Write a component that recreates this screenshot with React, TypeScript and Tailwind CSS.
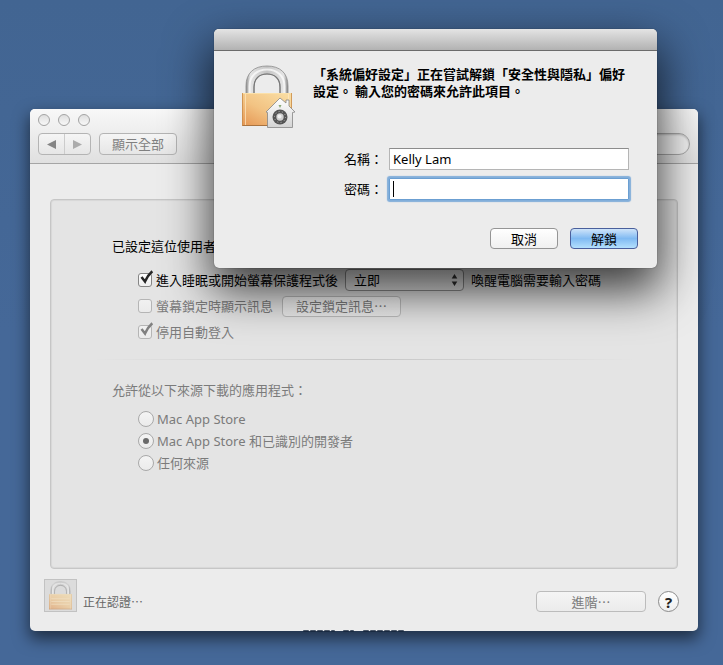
import { useId, type InputHTMLAttributes, type ReactNode } from "react";
import clsx from "clsx";

const CJK = "font-['Noto_Sans_CJK_TC','Noto_Sans',sans-serif]";

export default function App() {
  return (
    <div className="relative min-h-screen overflow-hidden bg-linear-to-b from-[#426592] via-[#456898] to-[#456898] pt-[109px] pr-[25px] pb-[34px] pl-[30px] font-['Noto_Sans','Noto_Sans_CJK_TC',sans-serif] text-[13px] leading-5 text-black">
      <PreferencesWindow />
      <UnlockDialog />
    </div>
  );
}

const PreferencesWindow = () => {
  return (
    <main className="relative rounded-[5px] bg-[#ececec] shadow-[0_7px_16px_1px_rgba(0,0,0,0.55)]">
      <DesktopLabel />
      <header className="flex h-[55px] flex-col rounded-t-[5px] border-b border-[#a5a5a5] bg-linear-to-b from-[#f8f8f8] to-[#e0e0e0] px-2 pt-[5px]">
        <div className="flex gap-2">
          <TrafficLight label="關閉" />
          <TrafficLight label="最小化" />
          <TrafficLight label="縮放" />
        </div>
        <div className="mt-[7px] flex items-center gap-2">
          <div className="flex h-[22px] w-[53px] items-center rounded-[4px] border border-[#b4b4b4] bg-linear-to-b from-[#f5f5f5] to-[#e6e6e6]">
            <button type="button" aria-label="上一頁" className="flex h-full flex-1 items-center justify-center border-r border-[#cccccc]">
              <svg width="9" height="9" viewBox="0 0 9 9">
                <path d="M0 4.5 9 0v9z" fill="#858585" />
              </svg>
            </button>
            <button type="button" aria-label="下一頁" className="flex h-full flex-1 items-center justify-center">
              <svg width="9" height="9" viewBox="0 0 9 9">
                <path d="M9 4.5 0 0v9z" fill="#acacac" />
              </svg>
            </button>
          </div>
          <button
            type="button"
            className={clsx(CJK, "flex h-[22px] w-[78px] items-center justify-center rounded-[4px] border border-[#b4b4b4] bg-linear-to-b from-[#f5f5f5] to-[#e6e6e6] text-[#808080]")}
          >
            顯示全部
          </button>
          <input
            type="search"
            aria-label="搜尋"
            className="ml-auto h-[22px] w-[140px] rounded-full border border-[#a8a8a8] bg-[#f3f3f3] px-3 shadow-[inset_0_1px_2px_rgba(0,0,0,0.2)] outline-none"
          />
        </div>
      </header>

      <div className="px-5 pt-[35px]">
        <section className="h-[370px] rounded-[4px] border border-[#c6c6c6] bg-[#e4e4e4] px-[61px] pt-9 shadow-[inset_0_0_1px_1px_rgba(0,0,0,0.06)]">
          <p className={CJK}>已設定這位使用者的登入密碼</p>
          <div className="mt-[13px] flex h-[22px] items-center pl-[26px]">
            <Checkbox defaultChecked>進入睡眠或開始螢幕保護程式後</Checkbox>
            <div className="relative ml-[7px] h-[22px] w-[119px] shrink-0">
              <select
                aria-label="需要密碼的時間"
                className={clsx(CJK, "h-full w-full appearance-none rounded-[4px] border border-[#8f8f8f] bg-linear-to-b from-[#fbfbfb] to-[#e8e8e8] pl-2 leading-5 outline-none")}
              >
                <option>立即</option>
              </select>
              <svg className="pointer-events-none absolute top-[5px] right-[6px]" width="7" height="12" viewBox="0 0 7 12">
                <path d="M3.500 0 6.300 4.500H.7zM3.500 12 6.300 7.500H.7z" fill="#333" />
              </svg>
            </div>
            <span className={clsx(CJK, "ml-[7px] whitespace-nowrap")}>喚醒電腦需要輸入密碼</span>
          </div>
          <div className="mt-1 flex h-[22px] items-center pl-[26px]">
            <Checkbox disabled>螢幕鎖定時顯示訊息</Checkbox>
            <PushButton disabled className="ml-[9px] w-[119px]">
              設定鎖定訊息…
            </PushButton>
          </div>
          <div className="mt-1 flex h-[22px] items-center pl-[26px]">
            <Checkbox disabled defaultChecked>
              停用自動登入
            </Checkbox>
          </div>

          <hr className="-mx-5 mt-4 h-px border-0 bg-linear-to-r from-transparent via-[#c6c6c6] to-transparent" />

          <fieldset disabled className="mt-5 text-[#7b7b7b]">
            <legend className={CJK}>允許從以下來源下載的應用程式：</legend>
            <div className="mt-2 pl-[26px]">
              <Radio>Mac App Store</Radio>
              <Radio defaultChecked>Mac App Store 和已識別的開發者</Radio>
              <Radio>任何來源</Radio>
            </div>
          </fieldset>
        </section>
      </div>

      <footer className="flex items-end pt-[10px] pr-[19px] pb-[19px] pl-[14px]">
        <button
          type="button"
          aria-label="鎖定"
          className="flex size-[33px] items-center justify-center border border-[#c2c2c2] bg-[#dcdcdc]"
        >
          <LockIcon className="h-[29px] w-[23px] opacity-60" />
        </button>
        <span className={clsx(CJK, "ml-[6px] text-xs leading-5 text-[#666]")}>正在認證…</span>
        <PushButton disabled className="ml-auto w-[110px]">
          進階…
        </PushButton>
        <button
          type="button"
          aria-label="輔助說明"
          className="ml-3 flex size-[21px] items-center justify-center rounded-full border border-[#8b8b8b] bg-linear-to-b from-white to-[#efefef] text-[15px] font-bold text-[#222]"
        >
          ?
        </button>
      </footer>
    </main>
  );
};

const UnlockDialog = () => {
  return (
    <div
      role="dialog"
      aria-labelledby="unlock-message"
      className="absolute top-[29px] right-[66px] left-[214px] rounded-[5px] bg-[#ececec] shadow-[0_0_1px_rgba(0,0,0,0.7),0_20px_46px_3px_rgba(0,0,0,0.74)]"
    >
      <div className="h-[22px] rounded-t-[5px] border-b border-[#6b6b6b] bg-linear-to-b from-[#e4e4e4] to-[#b2b2b2]" />
      <form className="px-[19px] pt-[14px] pb-[19px]" onSubmit={(e) => e.preventDefault()}>
        <div className="flex">
          <div className="h-[66px] w-[64px] shrink-0">
            <DialogLock />
          </div>
          <p id="unlock-message" className={clsx(CJK, "mr-2 ml-4 leading-[17px] font-bold")}>
            「系統偏好設定」正在嘗試解鎖「安全性與隱私」偏好設定。 輸入您的密碼來允許此項目。
          </p>
        </div>
        <div className="mt-[17px] grid grid-cols-[150px_1fr] items-center gap-x-[6px] gap-y-2 pr-[9px]">
          <label htmlFor="account" className={clsx(CJK, "text-right")}>
            名稱：
          </label>
          <input
            id="account"
            defaultValue="Kelly Lam"
            className="h-[22px] min-w-0 border border-[#b5b5b5] border-t-[#8c8c8c] bg-white px-[3px] outline-none"
          />
          <label htmlFor="password" className={clsx(CJK, "text-right")}>
            密碼：
          </label>
          <div className="relative h-[22px]">
            <input
              id="password"
              type="password"
              className="block h-full w-full rounded-[1px] border border-[#6b9fd2] bg-white px-[3px] caret-transparent shadow-[0_0_1px_2px_#82aeda] outline-none"
            />
            <span className="absolute top-[3px] left-1 h-4 w-px bg-black" />
          </div>
        </div>
        <div className="mt-7 flex justify-end gap-3">
          <PushButton className="w-[68px]">取消</PushButton>
          <PushButton primary className="w-[68px]">
            解鎖
          </PushButton>
        </div>
      </form>
    </div>
  );
};

const TrafficLight = ({ label }: { label: string }) => (
  <button
    type="button"
    aria-label={label}
    className="size-3 rounded-full border border-[#a3a3a3] bg-linear-to-b from-[#dedede] to-[#f8f8f8]"
  />
);

type PushButtonProps = {
  primary?: boolean;
  disabled?: boolean;
  className?: string;
  children: ReactNode;
};

const PushButton = ({ primary, disabled, className, children }: PushButtonProps) => (
  <button
    type="button"
    disabled={disabled}
    className={clsx(
      CJK,
      "flex h-[21px] items-center justify-center rounded-[4px] border whitespace-nowrap",
      primary && "border-[#4a5f9c] bg-linear-to-b from-[#cfe4f9] via-[#80baf2] to-[#b4e0fd]",
      disabled && "border-[#bcbcbc] bg-linear-to-b from-[#f5f5f5] to-[#ebebeb] text-[#7b7b7b]",
      !primary && !disabled && "border-[#959595] bg-linear-to-b from-white to-[#f0f0f0]",
      className,
    )}
  >
    {children}
  </button>
);

type ToggleProps = InputHTMLAttributes<HTMLInputElement> & { children: ReactNode };

const Checkbox = ({ children, disabled, ...props }: ToggleProps) => {
  const id = useId();
  return (
    <div className={clsx("flex items-center gap-1", disabled && "text-[#7b7b7b]")}>
      <span className="relative size-[14px] shrink-0">
        <input
          id={id}
          type="checkbox"
          disabled={disabled}
          className="peer block size-[14px] appearance-none rounded-[3px] border border-[#858585] bg-linear-to-b from-white to-[#eeeeee] disabled:border-[#b5b5b5] disabled:from-[#f1f1f1] disabled:to-[#ebebeb]"
          {...props}
        />
        <svg className="pointer-events-none absolute -top-[3px] left-px hidden peer-checked:block" width="15" height="15" viewBox="0 0 15 15">
          <path
            d="M2.500 7 6 11.500Q8.500 5.500 13.300 1.200"
            fill="none"
            stroke={disabled ? "#808080" : "#262626"}
            strokeWidth="2.500"
          />
        </svg>
      </span>
      <label htmlFor={id} className={clsx(CJK, "whitespace-nowrap")}>
        {children}
      </label>
    </div>
  );
};

const Radio = ({ children, ...props }: ToggleProps) => {
  const id = useId();
  return (
    <div className="flex h-[22px] items-center gap-[3px]">
      <span className="relative size-4 shrink-0">
        <input
          id={id}
          type="radio"
          name="download-source"
          className="peer block size-4 appearance-none rounded-full border border-[#a9a9a9] bg-linear-to-b from-[#f4f4f4] to-[#ebebeb]"
          {...props}
        />
        <span className="pointer-events-none absolute top-[5px] left-[5px] hidden size-[6px] rounded-full bg-[#6a6a6a] peer-checked:block" />
      </span>
      <label htmlFor={id}>{children}</label>
    </div>
  );
};

// Lower edge of a desktop icon's name, peeking out from under the window
const DesktopLabel = () => (
  <svg className="absolute -bottom-[2px] left-[272px]" width="106" height="3" viewBox="0 0 106 3">
    <path d="M2 1H32M42 1h9M62 1h42" stroke="#15253b" strokeWidth="2" strokeLinecap="round" strokeDasharray="4 3" opacity=".75" />
  </svg>
);

const LockShape = () => (
  <>
    <defs>
      <linearGradient id="brass" x1="0.800" x2="0" y1="0" y2="1">
        <stop offset="0" stopColor="#f9dba0" />
        <stop offset="0.500" stopColor="#f2c383" />
        <stop offset="1" stopColor="#e59552" />
      </linearGradient>
      <linearGradient id="steel" x1="0" x2="1">
        <stop offset="0" stopColor="#8e8e8e" />
        <stop offset="0.100" stopColor="#e4e4e4" />
        <stop offset="0.500" stopColor="#c4c4c4" />
        <stop offset="0.900" stopColor="#e4e4e4" />
        <stop offset="1" stopColor="#858585" />
      </linearGradient>
    </defs>
    <path d="M4 30V21C4 8 12 1 25 1s21 7 21 20v9h-8V22c0-8-5-13-13-13s-13 5-13 13v8z" fill="url(#steel)" stroke="#8b8b8b" strokeWidth=".8" />
    <path d="M7.500 28v-7C7.500 11 15 4.500 25 4.500S42.500 11 42.500 21v7" fill="none" stroke="#fff" strokeWidth="2" opacity=".7" />
    <path d="M12 28v-6c0-8 5-13 13-13s13 5 13 13v6" fill="none" stroke="#777" strokeWidth="1.200" />
    <path d="M0 28h50v33H0z" fill="url(#brass)" />
    <path d="M0 28.500h50" stroke="#fbe0a9" />
    <path d="M0 60.500h50" stroke="#a9733f" />
    <path d="M3.500 29v31M46.500 29v31" stroke="#ffeac4" strokeWidth="1" opacity=".7" />
    <path d="M.5 28v33M49.500 28v33" stroke="#c88a48" strokeWidth=".8" />
  </>
);

const LockIcon = ({ className }: { className?: string }) => (
  <svg className={className} viewBox="0 0 50 62">
    <LockShape />
    <path d="M5 38h40M5 44h40M5 50h40" stroke="#ffe3b5" strokeWidth="1.500" />
  </svg>
);

const DialogLock = () => (
  <svg width="64" height="66" viewBox="0 0 64 66">
    <defs>
      <linearGradient id="house" x1="0" x2="0" y1="0" y2="1">
        <stop offset="0" stopColor="#fff" />
        <stop offset="1" stopColor="#d4d4d4" />
      </linearGradient>
    </defs>
    <g transform="translate(9 0)">
      <LockShape />
    </g>
    <path d="M34.500 47.500v15h25v-15l2.500-.5-6-6v-6h-3v3l-6-5L33 47z" fill="url(#house)" stroke="#858585" strokeWidth=".8" strokeLinejoin="round" />
    <path d="m45.500 40 1.500 3 1.500-3z" fill="#89a876" />
    <circle cx="47" cy="52" r="7.500" fill="#555" />
    <circle cx="47" cy="52" r="5.500" fill="none" stroke="#b5b5b5" strokeWidth="1" strokeDasharray="1 2.400" />
    <circle cx="47" cy="52" r="3.700" fill="#cfcfcf" />
    <circle cx="46.500" cy="51.500" r="2" fill="#f0f0f0" />
  </svg>
);
